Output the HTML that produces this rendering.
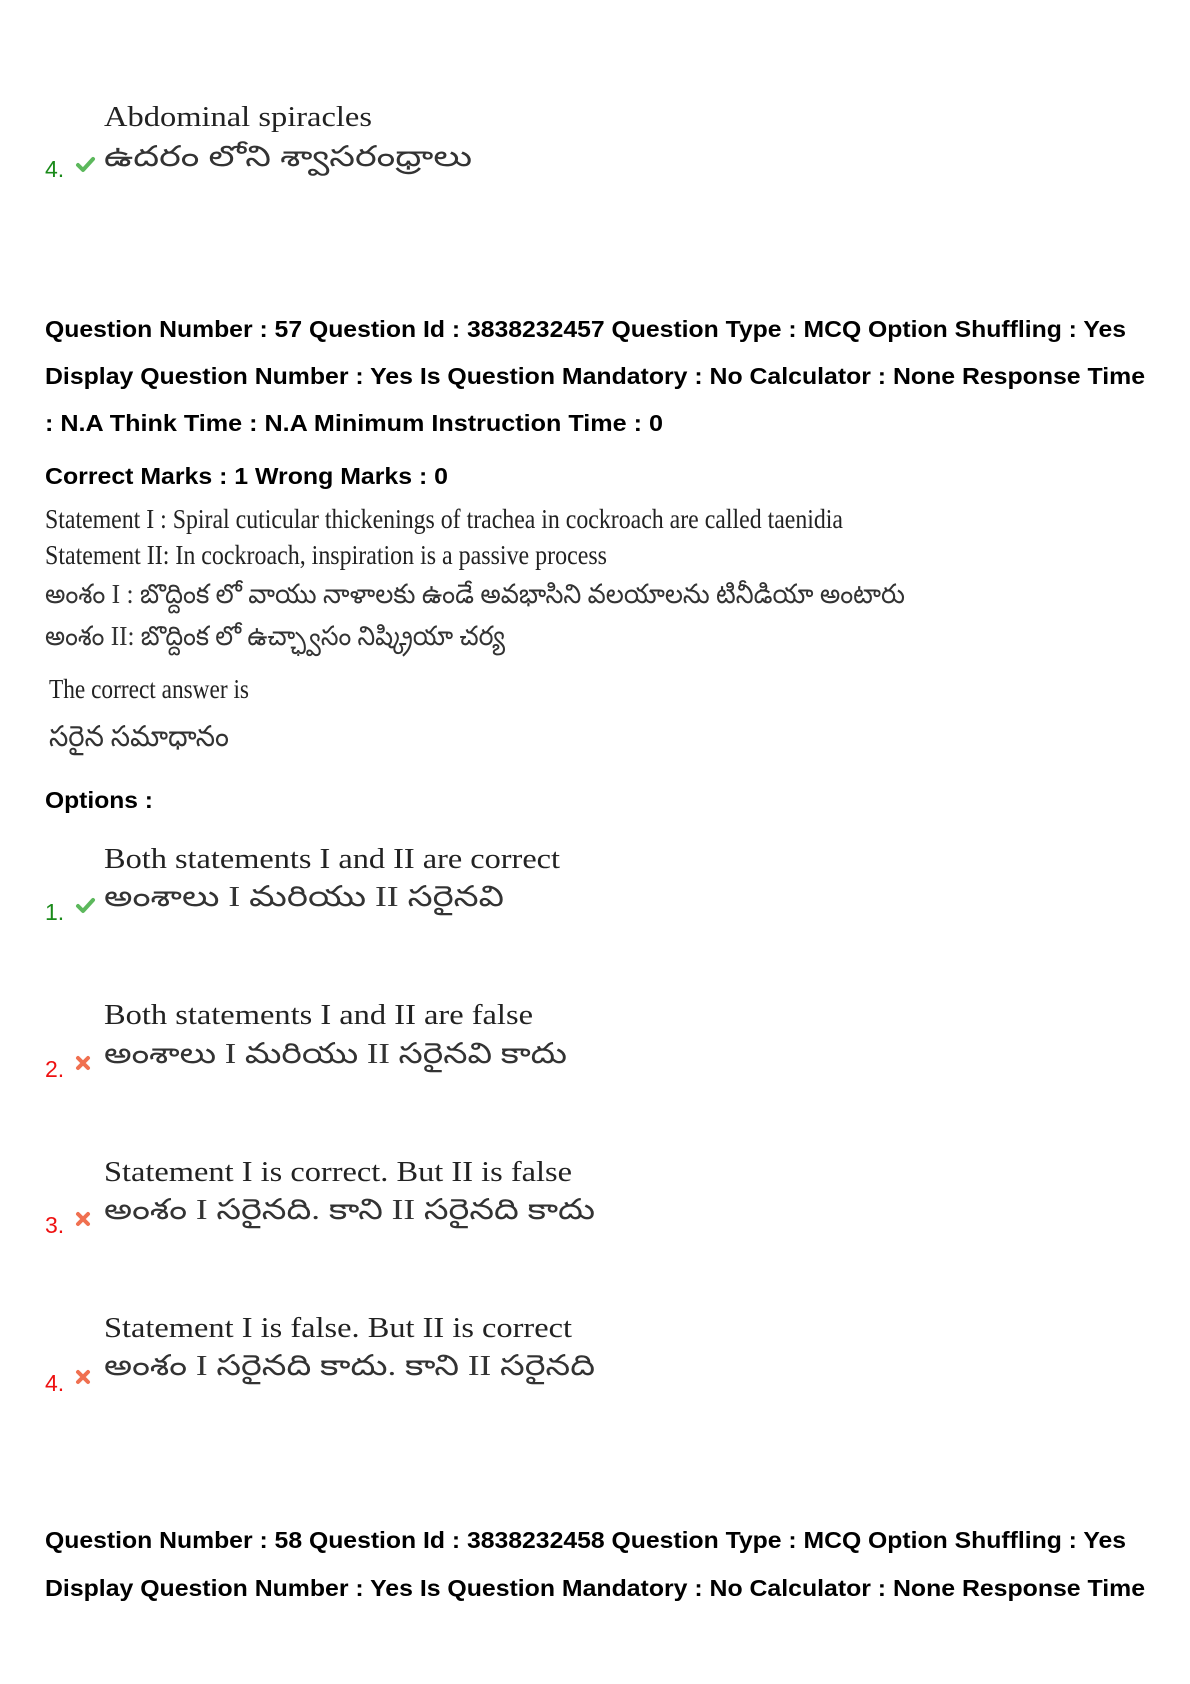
<!DOCTYPE html>
<html><head><meta charset="utf-8"><style>
html,body{margin:0;padding:0;background:#fff;}
svg{display:block;}
.b{font-family:"Liberation Sans",sans-serif;font-weight:bold;font-size:23px;fill:#000;}
.s{font-family:"Liberation Serif",serif;fill:#222;}
.t{font-family:"Liberation Serif","Noto Sans CJK JP",serif;fill:#333;}
.g{font-family:"Liberation Sans",sans-serif;font-size:23px;fill:#1a8a1a;}
.r{font-family:"Liberation Sans",sans-serif;font-size:23px;fill:#ee1111;}
</style></head><body>
<svg width="1190" height="1684" viewBox="0 0 1190 1684" xmlns="http://www.w3.org/2000/svg">
<defs>
<g id="ok"><path d="M-7,0 L-2,5 L8,-6" fill="none" stroke="#5cb85c" stroke-width="4" stroke-linecap="round" stroke-linejoin="round"/></g>
<g id="no"><path d="M-5,-5 L5,5 M5,-5 L-5,5" fill="none" stroke="#f07050" stroke-width="4" stroke-linecap="round"/></g>
</defs>

<text class="s" x="104" y="126" font-size="29" textLength="268" lengthAdjust="spacingAndGlyphs">Abdominal spiracles</text>
<text class="t" x="104" y="166" font-size="29" textLength="368" lengthAdjust="spacingAndGlyphs">ఉదరం లోని శ్వాసరంధ్రాలు</text>
<text class="g" x="45" y="177">4.</text>
<use href="#ok" x="85" y="165"/>

<text class="b" x="45" y="337" textLength="1081" lengthAdjust="spacingAndGlyphs">Question Number : 57 Question Id : 3838232457 Question Type : MCQ Option Shuffling : Yes</text>
<text class="b" x="45" y="384" textLength="1100" lengthAdjust="spacingAndGlyphs">Display Question Number : Yes Is Question Mandatory : No Calculator : None Response Time</text>
<text class="b" x="45" y="431" textLength="618" lengthAdjust="spacingAndGlyphs">: N.A Think Time : N.A Minimum Instruction Time : 0</text>
<text class="b" x="45" y="484" textLength="403" lengthAdjust="spacingAndGlyphs">Correct Marks : 1 Wrong Marks : 0</text>

<text class="s" x="45" y="528" font-size="27" textLength="798" lengthAdjust="spacingAndGlyphs">Statement I :   Spiral cuticular thickenings of trachea in cockroach are called taenidia</text>
<text class="s" x="45" y="564" font-size="27" textLength="562" lengthAdjust="spacingAndGlyphs">Statement II:   In cockroach, inspiration is a passive process</text>
<text class="t" x="45" y="603" font-size="27" textLength="860" lengthAdjust="spacingAndGlyphs">అంశం I : బొద్దింక లో వాయు నాళాలకు ఉండే అవభాసిని వలయాలను టినీడియా అంటారు</text>
<text class="t" x="45" y="645" font-size="27" textLength="460" lengthAdjust="spacingAndGlyphs">అంశం II: బొద్దింక లో ఉచ్ఛ్వాసం నిష్క్రియా చర్య</text>
<text class="s" x="49" y="698" font-size="27" textLength="200" lengthAdjust="spacingAndGlyphs">The correct answer is</text>
<text class="t" x="49" y="746" font-size="29" textLength="180" lengthAdjust="spacingAndGlyphs">సరైన సమాధానం</text>

<text class="b" x="45" y="808" textLength="108" lengthAdjust="spacingAndGlyphs">Options :</text>

<text class="s" x="104" y="868" font-size="29" textLength="456" lengthAdjust="spacingAndGlyphs">Both statements I and II are correct</text>
<text class="t" x="104" y="906" font-size="29" textLength="400" lengthAdjust="spacingAndGlyphs">అంశాలు  I మరియు II సరైనవి</text>
<text class="g" x="45" y="920">1.</text>
<use href="#ok" x="85" y="906"/>

<text class="s" x="104" y="1024" font-size="29" textLength="429" lengthAdjust="spacingAndGlyphs">Both statements I and II are false</text>
<text class="t" x="104" y="1063" font-size="29" textLength="463" lengthAdjust="spacingAndGlyphs">అంశాలు I మరియు II సరైనవి కాదు</text>
<text class="r" x="45" y="1077">2.</text>
<use href="#no" x="83" y="1063"/>

<text class="s" x="104" y="1181" font-size="29" textLength="468" lengthAdjust="spacingAndGlyphs">Statement I is correct. But II is false</text>
<text class="t" x="104" y="1219" font-size="29" textLength="491" lengthAdjust="spacingAndGlyphs">అంశం I సరైనది. కాని II సరైనది కాదు</text>
<text class="r" x="45" y="1233">3.</text>
<use href="#no" x="83" y="1219"/>

<text class="s" x="104" y="1337" font-size="29" textLength="468" lengthAdjust="spacingAndGlyphs">Statement I is false. But II is correct</text>
<text class="t" x="104" y="1375" font-size="29" textLength="491" lengthAdjust="spacingAndGlyphs">అంశం I సరైనది కాదు. కాని II సరైనది</text>
<text class="r" x="45" y="1391">4.</text>
<use href="#no" x="83" y="1377"/>

<text class="b" x="45" y="1548" textLength="1081" lengthAdjust="spacingAndGlyphs">Question Number : 58 Question Id : 3838232458 Question Type : MCQ Option Shuffling : Yes</text>
<text class="b" x="45" y="1596" textLength="1100" lengthAdjust="spacingAndGlyphs">Display Question Number : Yes Is Question Mandatory : No Calculator : None Response Time</text>
</svg>
</body></html>
